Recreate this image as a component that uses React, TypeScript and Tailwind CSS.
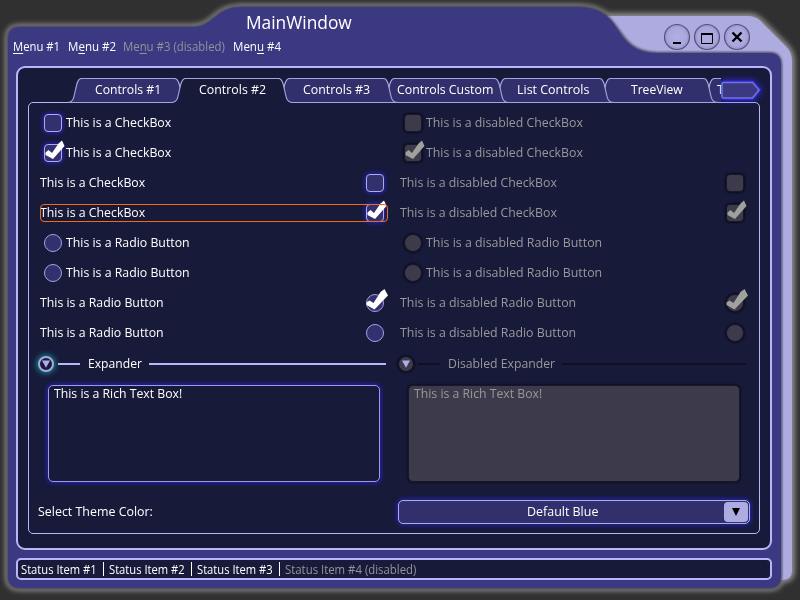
import React, { useLayoutEffect, useRef, useState } from "react";

// Text that is condensed or expanded horizontally to occupy a given width.
function Fit({ w, className = "", children }: { w: number; className?: string; children: React.ReactNode }) {
  const ref = useRef<HTMLSpanElement>(null);
  const [scale, setScale] = useState(1);
  useLayoutEffect(() => {
    if (ref.current) setScale(w / ref.current.offsetWidth);
  }, [w]);
  return (
    <span className={"block shrink-0 whitespace-nowrap " + className} style={{ width: w }}>
      <span ref={ref} className="inline-block origin-left" style={{ transform: `scaleX(${scale})` }}>
        {children}
      </span>
    </span>
  );
}

function Frame() {
  const light = "M590 16 H748 Q755 16 760 20.500 L786 46.500 Q792 52.500 792 61 V571 Q792 580 781 580 H590 Z";
  const body =
    "M8 39 Q8 27 20 27 H190 C217 27 212 7 243 7 H578 C627 7 610 53 658 53 H769 Q781 53 781 65 V576 Q781 588 769 588 H20 Q8 588 8 576 Z";
  return (
    <svg className="absolute inset-0" width="800" height="600" viewBox="0 0 800 600">
      <defs>
        <filter id="halo" x="-5%" y="-5%" width="110%" height="110%">
          <feGaussianBlur stdDeviation="2.5" />
        </filter>
        <filter id="edge" x="-5%" y="-5%" width="110%" height="110%">
          <feGaussianBlur stdDeviation="0.8" />
        </filter>
      </defs>
      <g filter="url(#halo)" fill="#8c8c8c" stroke="#8c8c8c" strokeWidth="6">
        <path d={light} />
        <path d={body} />
      </g>
      <path d={light} fill="#adabe0" />
      <path d={body} fill="none" stroke="#3a3a48" strokeWidth="2" filter="url(#edge)" />
      <path d={body} fill="#3b3982" />
    </svg>
  );
}

function WindowButton({ children }: { children: React.ReactNode }) {
  return (
    <svg width="30" height="30" viewBox="0 0 30 30">
      <defs>
        <radialGradient id="knob">
          <stop offset="0" stopColor="#b0aee4" />
          <stop offset="0.75" stopColor="#a9a7dc" />
          <stop offset="1" stopColor="#9290c4" />
        </radialGradient>
      </defs>
      <circle cx="15" cy="15" r="12.500" fill="url(#knob)" stroke="#55537e" strokeWidth="1.200" />
      {children}
    </svg>
  );
}

function Menu({ w, pre, hot, post, disabled, className = "" }: { w: number; pre: string; hot: string; post: string; disabled?: boolean; className?: string }) {
  return (
    <Fit w={w} className={(disabled ? "text-[#93939a] " : "text-white ") + className}>
      {pre}
      <span className="underline underline-offset-2">{hot}</span>
      {post}
    </Fit>
  );
}

function Tab({ label, w, tw, selected, partial, z }: { label: string; w: number; tw: number; selected?: boolean; partial?: boolean; z: string }) {
  const left = "M-8 24.500 C-3 24 -2.500 21 -1 14 C0.500 7 1.500 0.500 5 0.500";
  const right = `H${w - 5} C${w - 1.5} 0.500 ${w - 0.5} 7 ${w + 1} 14 C${w + 2.5} 21 ${w + 3} 24 ${w + 8} 24.500`;
  return (
    <div className={"relative flex h-[25px] shrink-0 pt-0.5 " + (partial ? "justify-start pl-2 " : "justify-center ") + z} style={{ width: w }}>
      <svg className="absolute inset-0 overflow-visible" width={w} height="25">
        <path d={`${left} ${right}${selected ? " V26 H-8 Z" : ""}`} fill={selected ? "#181a3a" : "#32306c"} />
        <path d={`${left} ${right}${selected ? "" : " Z"}`} fill="none" stroke="#a5a3e0" strokeWidth="1.100" />
      </svg>
      <Fit w={tw} className="relative text-white">{label}</Fit>
    </div>
  );
}

function Box({ round, checked, disabled }: { round?: boolean; checked?: boolean; disabled?: boolean }) {
  const shape = round ? "rounded-full " : "rounded-[4px] ";
  const skin = disabled
    ? "bg-[#3d3a4c] border-[#17172b] shadow-[0_0_2px_1px_#0c0c1a] "
    : round
      ? "bg-[#33306e] border-[#a3a1e6] "
      : "bg-[#33306e] border-[#adabf0] shadow-[0_0_4px_1px_#2424b8] ";
  return (
    <span className={"relative block size-[18px] shrink-0 border " + shape + skin}>
      {checked && (
        <svg className="absolute -left-px -top-px overflow-visible" width="18" height="18">
          <path
            d={round ? "M0.500 8.500 L3.500 6.500 L7.500 9 L14.500 -2 L18.500 -5 L22 1.500 L8.500 15.500 L0.500 11 Z" : "M1.500 8.500 L4.500 6 L8 9 L14.500 -0.500 L18 -3.500 L20.500 2 L9 15 L1.500 11 Z"}
            fill={disabled ? "#a0a09c" : "#ffffff"}
          />
        </svg>
      )}
    </span>
  );
}

type RowProps = { label: string; w: number; round?: boolean; checked?: boolean; disabled?: boolean; flip?: boolean; focus?: boolean };

function Row({ label, w, round, checked, disabled, flip, focus }: RowProps) {
  return (
    <div className="flex h-[30px] items-center">
      <div className={"relative flex h-[18px] w-[348px] items-center " + (flip ? "flex-row-reverse justify-between pr-1" : "gap-1 pl-1")}>
        <Box round={round} checked={checked} disabled={disabled} />
        <Fit w={w} className={"-mt-0.5 " + (disabled ? "text-[#98989a]" : "text-white")}>{label}</Fit>
        {focus && <span className="absolute inset-0 rounded-[4px] border border-[#f46a12]" />}
      </div>
    </div>
  );
}

function Rows({ disabled }: { disabled?: boolean }) {
  const check = disabled ? "This is a disabled CheckBox" : "This is a CheckBox";
  const radio = disabled ? "This is a disabled Radio Button" : "This is a Radio Button";
  const cw = disabled ? 157 : 105;
  const rw = disabled ? 176 : 124;
  return (
    <div className="flex w-[348px] flex-col">
      <Row label={check} w={cw} disabled={disabled} />
      <Row label={check} w={cw} disabled={disabled} checked />
      <Row label={check} w={cw} disabled={disabled} flip />
      <Row label={check} w={cw} disabled={disabled} flip checked focus={!disabled} />
      <Row label={radio} w={rw} disabled={disabled} round />
      <Row label={radio} w={rw} disabled={disabled} round />
      <Row label={radio} w={rw} disabled={disabled} round flip checked />
      <Row label={radio} w={rw} disabled={disabled} round flip />
    </div>
  );
}

function Expander({ disabled }: { disabled?: boolean }) {
  const line = disabled ? "bg-[#101024]" : "bg-[#b9b7fa]";
  return (
    <div className="flex h-6 w-[348px] items-center">
      <span
        className={
          "flex size-4 shrink-0 items-center justify-center rounded-full " +
          (disabled ? "border border-[#151528] bg-[#3d3a4c] shadow-[0_0_2px_1px_#0c0c1a]" : "border-2 border-[#a9a7dc] bg-[#1a1a40] shadow-[0_0_5px_2px_#11777f]")
        }
      >
        <svg className="shrink-0" width="8" height="8"><path d="M0 0.500 H8 L4 7.800 Z" fill="#b0aee6" /></svg>
      </span>
      <span className={"ml-1 h-0.5 w-[22px] " + line} />
      <Fit w={disabled ? 107 : 54} className={"-mt-0.5 ml-2 mr-[7px] " + (disabled ? "text-[#98989a]" : "text-white")}>
        {disabled ? "Disabled Expander" : "Expander"}
      </Fit>
      <span className={"h-0.5 flex-1 " + line} />
    </div>
  );
}

function RichText({ disabled }: { disabled?: boolean }) {
  return (
    <div
      className={
        "h-[97px] w-[332px] rounded-[5px] border pl-[5px] pt-0 " +
        (disabled ? "border-[#17172b] bg-[#3d3a4c] text-[#98989a] shadow-[0_0_2px_1px_#101022]" : "border-[#9d9be8] bg-[#181a3a] text-white shadow-[0_0_4px_1px_#2424b8]")
      }
    >
      <Fit w={128} className="-mt-0.5">This is a Rich Text Box!</Fit>
    </div>
  );
}

export default function App() {
  return (
    <div className="relative h-[600px] w-[800px] overflow-hidden bg-[#303030] font-['Open_Sans','Noto_Sans',sans-serif] text-[13.5px] leading-[18px]">
      <Frame />
      <div className="relative flex h-full flex-col pl-4">
        <header className="flex h-[66px] justify-between pr-12">
          <div>
            <h1 className="pl-[230px] pt-[10px] text-[18px] leading-6"><Fit w={106} className="text-white">MainWindow</Fit></h1>
            <nav className="-ml-[3px] flex pt-1 text-[12.5px]">
              <Menu w={47} pre="" hot="M" post="enu #1" />
              <Menu w={48} pre="M" hot="e" post="nu #2" className="ml-2" />
              <Menu w={102} pre="Me" hot="n" post="u #3 (disabled)" disabled className="ml-[7px]" />
              <Menu w={48} pre="Men" hot="u" post=" #4" className="ml-2" />
            </nav>
          </div>
          <div className="flex pt-[22px]">
            <WindowButton><path d="M11 21 H19" stroke="#000" strokeWidth="2" /></WindowButton>
            <WindowButton><path d="M9.500 11 V21.500 H20.500 V11" fill="none" stroke="#000" /><path d="M9 12 H21" stroke="#000" strokeWidth="2" /></WindowButton>
            <WindowButton><path d="M10.500 10.500 L19.500 19.500 M19.500 10.500 L10.500 19.500" stroke="#000" strokeWidth="2.400" /></WindowButton>
          </div>
        </header>

        <main className="h-[484px] w-[756px] rounded-[9px] border-2 border-[#b9b7fa] bg-[#181a3a] pl-[10px] pt-[10px]">
          <div className="relative z-10 flex h-[25px]">
            <div className="flex w-[693px] overflow-hidden pl-[48px]">
              <Tab label="Controls #1" w={104} tw={66} z="z-20" />
              <Tab label="Controls #2" w={104} tw={67} selected z="z-30" />
              <Tab label="Controls #3" w={105} tw={67} z="z-20" />
              <Tab label="Controls Custom" w={111} tw={96} z="z-[19]" />
              <Tab label="List Controls" w={105} tw={72} z="z-[18]" />
              <Tab label="TreeView" w={104} tw={52} z="z-[17]" />
              <Tab label="T" w={104} tw={7} partial z="z-[16]" />
            </div>
            <svg className="overflow-visible drop-shadow-[0_0_3px_#3030ff]" width="40" height="25">
              <path d="M3 4.500 H31.500 L38 12 L31.500 20 H3 Q1 20 1 18 V6.500 Q1 4.500 3 4.500 Z" fill="none" stroke="#2c2ce0" strokeWidth="3.500" />
              <path d="M3 4.500 H31.500 L38 12 L31.500 20 H3 Q1 20 1 18 V6.500 Q1 4.500 3 4.500 Z" fill="#3b3982" stroke="#7472d0" strokeWidth="1.600" />
            </svg>
          </div>
          <section className="-mt-px h-[432px] w-[732px] rounded-[5px] border border-[#b9b7fa] pt-[5px]">
            <div className="flex gap-3 pl-[11px]">
              <Rows />
              <Rows disabled />
            </div>
            <div className="flex gap-3 pl-[9px] pt-1">
              <Expander />
              <Expander disabled />
            </div>
            <div className="flex gap-7 pl-[19px] pt-[9px]">
              <RichText />
              <RichText disabled />
            </div>
            <div className="flex items-center pl-[9px] pt-[18px]">
              <div className="-mt-0.5 w-[360px] text-white"><Fit w={115}>Select Theme Color:</Fit></div>
              <div className="flex h-6 w-[352px] items-center rounded-[5px] border border-[#adabf0] bg-[#32306c] pl-[128px] pr-px text-white shadow-[0_0_4px_1px_#2424b8]">
                <Fit w={71} className="-mt-0.5">Default Blue</Fit>
                <span className="ml-auto flex h-5 w-6 items-center justify-center rounded-[4px] bg-[#adabe0]">
                  <svg width="8" height="8"><path d="M0 0 H8 L4 8 Z" fill="#000" /></svg>
                </span>
              </div>
            </div>
          </section>
        </main>

        <footer className="mt-2 flex h-[22px] w-[756px] items-center rounded-[5px] border-2 border-[#b9b7fa] bg-[#181a3a] pl-[3px] text-[12.5px] text-white">
          <Fit w={76} className="mt-0.5">Status Item #1</Fit>
          <span className="ml-1.5 mr-[5px] h-[14px] w-px bg-white" />
          <Fit w={76} className="mt-0.5">Status Item #2</Fit>
          <span className="ml-1.5 mr-[5px] h-[14px] w-px bg-white" />
          <Fit w={76} className="mt-0.5">Status Item #3</Fit>
          <span className="ml-1.5 mr-[5px] h-[14px] w-px bg-white" />
          <Fit w={131} className="mt-0.5 text-[#93939a]">Status Item #4 (disabled)</Fit>
        </footer>
      </div>
    </div>
  );
}
